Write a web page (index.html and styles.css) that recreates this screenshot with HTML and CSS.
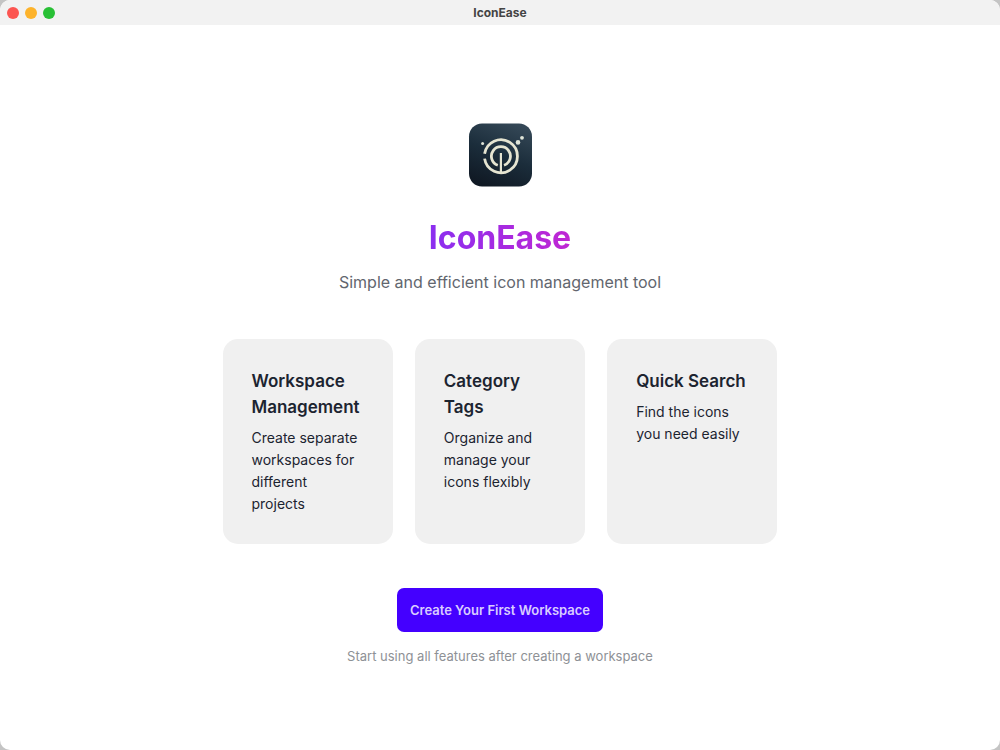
FILE: index.html
```html
<!DOCTYPE html>
<html lang="en">
<head>
<meta charset="utf-8">
<meta name="viewport" content="width=device-width, initial-scale=1">
<title>IconEase</title>
<link rel="stylesheet" href="styles.css">
</head>
<body>
<div class="window">
  <header class="titlebar">
    <div class="controls">
      <button class="dot dot-close" type="button" aria-label="Close"></button>
      <button class="dot dot-minimize" type="button" aria-label="Minimize"></button>
      <button class="dot dot-zoom" type="button" aria-label="Zoom"></button>
    </div>
    <span class="titlebar-text">IconEase</span>
  </header>
  <main class="welcome">
    <svg class="logo" viewBox="0 0 64 64" aria-hidden="true">
      <defs>
        <linearGradient id="tile" x1="0.7" y1="0" x2="0.3" y2="1">
          <stop offset="0" stop-color="#344756"/>
          <stop offset="0.5" stop-color="#1b2d3b"/>
          <stop offset="1" stop-color="#101924"/>
        </linearGradient>
      </defs>
      <rect x="1" y="0.5" width="63" height="63" rx="13" fill="url(#tile)"/>
      <g fill="none" stroke="#e6e5d2" stroke-width="2.8">
        <path d="M16.6 30.8A16.500 16.500 0 1 1 16.600 35.600"/>
        <path d="M29.8 42.2A9.500 9.500 0 1 1 36 42.2"/>
        <path d="M32.900 30V49" stroke-width="2.200"/>
      </g>
      <g fill="#dfe4d8">
        <circle cx="14.600" cy="20.400" r="1.500"/>
        <circle cx="50" cy="19.400" r="2.300"/>
        <circle cx="54" cy="14.800" r="1.900"/>
      </g>
    </svg>
    <h1 class="title">IconEase</h1>
    <p class="subtitle">Simple and efficient icon management tool</p>
    <section class="features">
      <article class="card">
        <h2 class="card-title">Workspace Management</h2>
        <p class="card-text">Create separate workspaces for different projects</p>
      </article>
      <article class="card">
        <h2 class="card-title">Category Tags</h2>
        <p class="card-text">Organize and manage your icons flexibly</p>
      </article>
      <article class="card">
        <h2 class="card-title">Quick Search</h2>
        <p class="card-text">Find the icons you need easily</p>
      </article>
    </section>
    <button class="cta" type="button">Create Your First Workspace</button>
    <p class="hint">Start using all features after creating a workspace</p>
  </main>
</div>
</body>
</html>
```
FILE: styles.css
```css
* { box-sizing: border-box; }
body {
  margin: 0;
  background: #c4c4c4;
  color: #1c2430;
  font-family: Inter, "Liberation Sans", sans-serif;
}
h1, h2, p { margin: 0; }
.window {
  display: flex;
  flex-direction: column;
  min-height: 100vh;
  border-radius: 10px;
  overflow: hidden;
  background: #fff;
}
.titlebar {
  display: grid;
  grid-template-columns: 1fr auto 1fr;
  align-items: center;
  height: 25px;
  padding: 0 7px;
  background: #f2f2f2;
}
.controls { display: flex; gap: 6px; }
.dot {
  width: 12px;
  height: 12px;
  padding: 0;
  border: 0;
  border-radius: 50%;
}
.dot-close { background: #fc5551; }
.dot-minimize { background: #fdb32b; }
.dot-zoom { background: #28c035; }
.titlebar-text { color: #444; font-size: 12px; font-weight: 700; }
.welcome {
  flex: 1;
  display: flex;
  flex-direction: column;
  align-items: center;
  justify-content: center;
  padding: 24px 24px 11px;
}
.logo { display: block; width: 64px; height: 64px; }
.title {
  margin-top: 31px;
  background: linear-gradient(90deg, #8b2ff0, #c026d3);
  -webkit-background-clip: text;
  background-clip: text;
  color: transparent;
  font-size: 32px;
  font-weight: 700;
  line-height: 40px;
}
.subtitle {
  margin-top: 11px;
  color: #62666e;
  font-size: 16px;
  line-height: 26px;
}
.features {
  display: grid;
  grid-template-columns: repeat(3, 1fr);
  gap: 22px;
  width: 100%;
  max-width: 555px;
  margin-top: 44px;
}
.card {
  padding: 29px 30px 29px 29px;
  border-radius: 15px;
  background: #f0f0f0;
}
.card-title {
  font-size: 17px;
  font-weight: 600;
  line-height: 26px;
}
.card-text {
  margin-top: 7px;
  font-size: 14px;
  line-height: 22px;
}
.cta {
  height: 44px;
  margin-top: 44px;
  padding: 0 13px;
  border: 0;
  border-radius: 7px;
  background: #4400ff;
  color: #d9ccff;
  font: 600 13px/20px Inter, "Liberation Sans", sans-serif;
}
.hint {
  margin-top: 14px;
  color: #8e9196;
  font-size: 13px;
  line-height: 20px;
}
```
